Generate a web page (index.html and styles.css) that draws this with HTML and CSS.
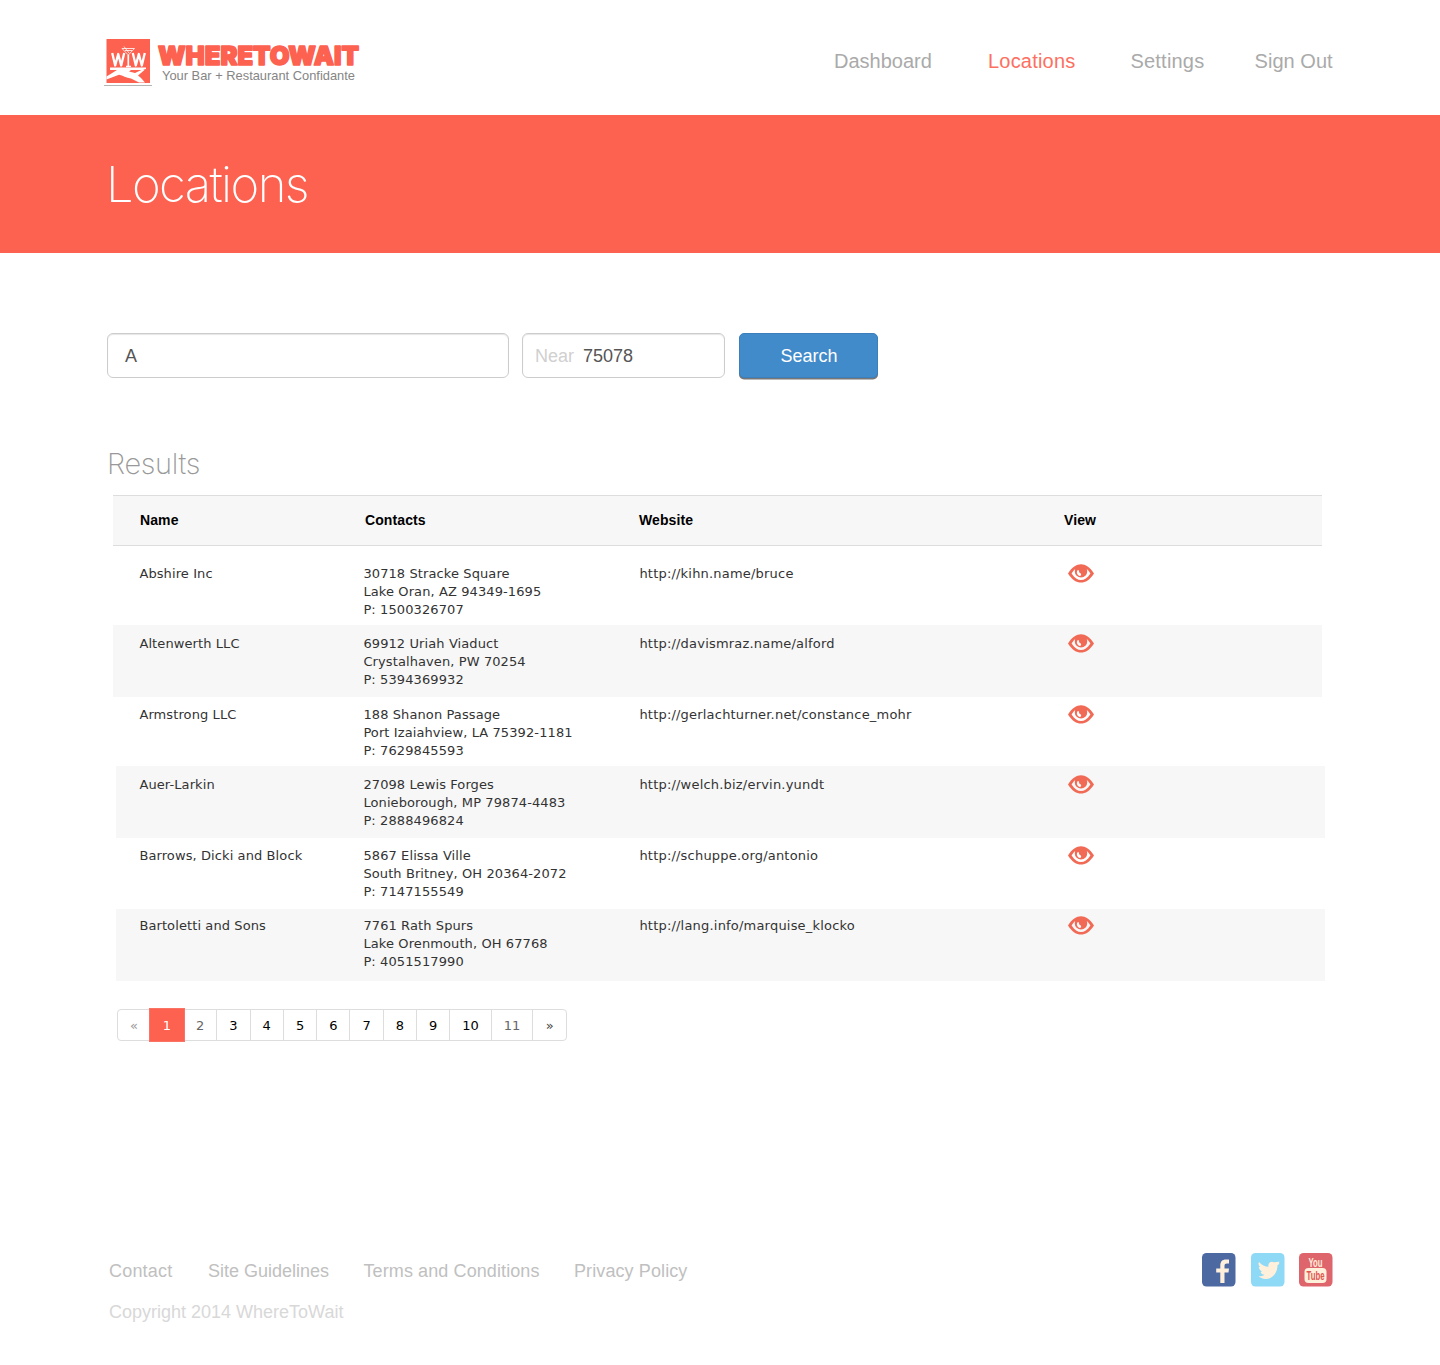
FILE: index.html
```html
<!DOCTYPE html>
<html lang="en">
<head>
<meta charset="utf-8">
<title>Locations - WhereToWait</title>
<link rel="stylesheet" href="styles.css">
</head>
<body>
<svg class="defs" aria-hidden="true">
  <symbol id="eye" viewBox="0 0 26 19">
    <path fill-rule="evenodd" d="M0 9.500C4 3 8.500 0.300 13 0.300S22 3 26 9.500C22 15.800 17.500 18.600 13 18.600S4 15.800 0 9.500ZM3.600 9.500C6.500 14 9.700 16.100 13 16.100S19.500 14 22.400 9.500C21.300 7.400 20.200 6 18.800 4.900C19.200 6 19.200 6.700 19.200 7.400A6.200 6.200 0 0 1 6.800 7.400C6.800 6.500 7 5.800 7.200 4.900C5.800 6 4.700 7.400 3.600 9.500ZM9.600 6.300C8.100 8.300 9.200 11.100 11.600 12C13.300 11.900 13.600 10.600 12.600 9.300C11.700 9 10.900 8.200 11 6.900C10.700 6.100 10.200 5.800 9.600 6.300Z"/>
  </symbol>
</svg>

<header class="header">
  <svg class="logo" viewBox="0 0 260 50" width="260" height="50" role="img" aria-label="WhereToWait">
    <rect x="2.500" y="2" width="43.500" height="44" fill="#fd6150"/>
    <path d="M0 48.500H48" stroke="#b5b5b5"/>
    <g fill="none" stroke="#fff" stroke-linejoin="round">
      <path d="M8.200 16L11.200 28.500L14.200 17L17.200 28.500L20.200 16M28.800 16L31.800 28.500L34.800 17L37.800 28.500L40.800 16" stroke-width="2.300"/>
      <path d="M18 11.500H30.500L24.300 18ZM20 9.500L25 16M21 13.500H28" stroke-width=".8"/>
      <path d="M24.300 18V30M22 29.500H27" stroke-width="1.700"/>
    </g>
    <path d="M6 30.500H42V32L38 33H27L25 34.500L31 36L38.500 32.500L40.500 33L34 38.500L37 41L41 45.500H35L27 41.500C22 41 19 38.500 15 37.800L2.500 42.500V39.500L13 33H6Z" fill="#fff"/>
    <text class="logo-name" x="54" y="27.800" textLength="201" lengthAdjust="spacingAndGlyphs">WHERETOWAIT</text>
    <text class="logo-tag" x="58" y="43" textLength="193" lengthAdjust="spacingAndGlyphs">Your Bar + Restaurant Confidante</text>
  </svg>
  <nav class="nav">
    <a class="nav-dashboard">Dashboard</a>
    <a class="nav-locations">Locations</a>
    <a class="nav-settings">Settings</a>
    <a class="nav-out">Sign Out</a>
  </nav>
</header>

<section class="banner"><h1>Locations</h1></section>

<main class="main">
  <form class="search">
    <div class="field field-name">A</div>
    <div class="field field-near"><span class="near">Near</span>75078</div>
    <button class="button" type="button">Search</button>
  </form>

  <h2>Results</h2>
  <div class="table">
    <div class="row head"><b>Name</b><b>Contacts</b><b>Website</b><b>View</b></div>
    <div class="row r1"><span>Abshire Inc</span><span>30718 Stracke Square<br>Lake Oran, AZ 94349-1695<br>P: 1500326707</span><span class="url">http://kihn.name/bruce</span><svg class="eye"><use href="#eye"/></svg></div>
    <div class="row r2 shade"><span>Altenwerth LLC</span><span>69912 Uriah Viaduct<br>Crystalhaven, PW 70254<br>P: 5394369932</span><span class="url">http://davismraz.name/alford</span><svg class="eye"><use href="#eye"/></svg></div>
    <div class="row r3"><span>Armstrong LLC</span><span>188 Shanon Passage<br>Port Izaiahview, LA 75392-1181<br>P: 7629845593</span><span class="url">http://gerlachturner.net/constance_mohr</span><svg class="eye"><use href="#eye"/></svg></div>
    <div class="row r4 shade inset"><span>Auer-Larkin</span><span>27098 Lewis Forges<br>Lonieborough, MP 79874-4483<br>P: 2888496824</span><span class="url">http://welch.biz/ervin.yundt</span><svg class="eye"><use href="#eye"/></svg></div>
    <div class="row r5"><span>Barrows, Dicki and Block</span><span>5867 Elissa Ville<br>South Britney, OH 20364-2072<br>P: 7147155549</span><span class="url">http://schuppe.org/antonio</span><svg class="eye"><use href="#eye"/></svg></div>
    <div class="row r6 shade inset"><span>Bartoletti and Sons</span><span>7761 Rath Spurs<br>Lake Orenmouth, OH 67768<br>P: 4051517990</span><span class="url">http://lang.info/marquise_klocko</span><svg class="eye"><use href="#eye"/></svg></div>
  </div>

  <div class="pager">
    <a class="first">«</a><a class="current">1</a><a class="dim">2</a><a>3</a><a>4</a><a>5</a><a>6</a><a>7</a><a>8</a><a>9</a><a class="wide">10</a><a class="wide dim">11</a><a class="last">»</a>
  </div>
</main>

<footer class="footer">
  <div>
    <div class="links"><a class="f1">Contact</a><a class="f2">Site Guidelines</a><a class="f3">Terms and Conditions</a><a class="f4">Privacy Policy</a></div>
    <p class="copy">Copyright 2014 WhereToWait</p>
  </div>
  <div class="social">
    <svg viewBox="0 0 34 34"><rect width="33.500" height="33.500" rx="4.500" fill="#4c69a2"/><path d="M18.300 30V19.500H14.200V15.500H18.300V12.500C18.300 8.500 20.300 6.500 24 6.500H27V10.500H25C23.300 10.500 22.500 11.300 22.500 12.800V15.500H27L26.500 19.500H22.500V30Z" fill="#fff0dc"/></svg>
    <svg viewBox="0 0 34 34"><rect width="33.500" height="33.500" rx="4.500" fill="#8ed9f6"/><path d="M8 9C10.500 12 14 13.700 17.500 13.700C16.500 10 20 7.700 23 9.300C25 9.500 26.500 8.500 28.500 8.800L27.700 10.300L28.500 10.800L26.500 12.300C26.500 20 21 26.500 14.500 26C11.500 25.800 9 24.500 7.500 23.500C10 23.500 12 23 13.500 21.800C11.500 21.500 10 20.500 9.600 18.900L11 18.500C9 17.500 7.800 16 7.800 13.800L9.300 14.200C7.500 12.500 7 10.800 8 9Z" fill="#fff0dc"/></svg>
    <svg viewBox="0 0 34 34"><rect width="33.500" height="33.500" rx="4.500" fill="#df656c"/><rect x="5.500" y="15" width="22" height="15" rx="4" fill="#fff0dc"/><text class="you" x="9.500" y="13.800" textLength="14" lengthAdjust="spacingAndGlyphs">You</text><text class="tube" x="7.500" y="27" textLength="18" lengthAdjust="spacingAndGlyphs">Tube</text></svg>
  </div>
</footer>
</body>
</html>
```
FILE: styles.css
```css
* { box-sizing: border-box; }
body { margin: 0; width: 1440px; height: 1365px; background: #fff; font-family: "Liberation Sans", Arial, sans-serif; color: #333; }
.defs { display: none; }

.header { height: 115px; padding: 37px 106.500px 0 104px; display: flex; justify-content: space-between; }
.logo { flex: none; }
.logo-name { font: 900 26px Inter, sans-serif; fill: #fd6150; stroke: #fd6150; stroke-width: 1.6px; stroke-linejoin: round; }
.logo-tag { font: 13px "Liberation Sans", sans-serif; fill: #858585; }
.nav { display: flex; padding-top: 12px; font-size: 20px; line-height: 24px; color: #aaa; white-space: nowrap; }
.nav a { flex: none; }
.nav-dashboard { width: 154px; }
.nav-locations { width: 142.500px; color: #fd6f60; letter-spacing: .2px; }
.nav-settings { width: 124px; letter-spacing: .2px; }
.nav-out { width: 79px; letter-spacing: .05px; }

.banner { height: 138px; background: #fd6150; padding: 38px 0 0 106px; }
h1 { margin: 0; font: 200 49px/64px Inter, sans-serif; color: #fff; letter-spacing: -1.600px; }

.main { padding: 80px 107px 0; height: 954px; }
.search { display: flex; height: 47px; }
.field { height: 45px; border: 1px solid #ccc; border-radius: 6px; box-shadow: inset 0 1px 1px rgba(0,0,0,.1); font-size: 18px; line-height: 44px; color: #555; }
.field-name { width: 402px; padding-left: 17px; margin-right: 13px; }
.field-near { width: 203px; padding-left: 12px; margin-right: 14px; display: flex; }
.near { width: 48px; color: #d0d0d0; }
.button { width: 139px; height: 45px; border: 1px solid #3b7fbd; border-radius: 5px; background: #428bca; box-shadow: 0 1.500px 0 #777; color: #fff; font: 18px/43px "Liberation Sans", sans-serif; padding: 1px 0 0 1px; }

h2 { margin: 66px 0 0; font: 200 29px/36px Inter, sans-serif; letter-spacing: -.35px; color: #999; }
.table { margin: 13px 0 0 6px; width: 1209px; font: 13px/18px "DejaVu Sans", Verdana, sans-serif; }
.row { display: grid; grid-template-columns: 224px 276px 428px 1fr; padding-left: 26px; }
.row span { padding: 1px 0 0 .4px; letter-spacing: .1px; }
.row .url { letter-spacing: .2px; }
.head { height: 51px; background: #f7f7f7; border: solid #ddd; border-width: 1px 0; padding: 15px 0 0 27px; grid-template-columns: 225px 274px 425px 1fr; font: bold 14px/18px "Liberation Sans", sans-serif; color: #000; letter-spacing: .1px; }
.shade { background: #f7f7f7; }
.inset { margin: 0 -3px 0 3px; padding-left: 23px; }
.eye { width: 26px; height: 19px; fill: #f06a55; margin-left: 1px; }
.r1 { height: 79px; padding-top: 18px; }
.r2 { height: 72px; padding-top: 9px; }
.r3 { height: 69px; padding-top: 8px; }
.r4 { height: 72px; padding-top: 9px; }
.r5 { height: 71px; padding-top: 8px; }
.r6 { height: 72px; padding-top: 7px; }

.pager { margin: 28px 0 0 10px; width: 450px; height: 32px; display: flex; border: 1px solid #ddd; border-radius: 4px; font: 500 13px/31px "DejaVu Sans", sans-serif; color: #000; }
.pager a { width: 33.300px; border-right: 1px solid #ddd; text-align: center; flex: none; }
.pager .wide { width: 41.500px; }
.pager .first { width: 32px; border: 0; color: #999; }
.pager .current { width: 36px; height: 34px; margin: -2px -1px 0 -1px; line-height: 33px; background: #fd6150; border: 1px solid #fb7364; color: #fff; }
.pager .dim { color: #666; }
.pager .last { flex: 1; border: 0; color: #444; }

.footer { padding: 46px 107px 0 109px; display: flex; justify-content: space-between; font-size: 18px; color: #c0c0c0; }
.links { display: flex; line-height: 36px; white-space: nowrap; }
.f1 { width: 99px; letter-spacing: .2px; }
.f2 { width: 155.500px; }
.f3 { width: 210.500px; letter-spacing: .1px; }
.f4 { letter-spacing: .1px; }
.copy { margin: 5px 0 0; line-height: 36px; color: #d8d8d8; }
.social { display: flex; gap: 14.500px; }
.social svg { width: 34px; height: 34px; overflow: visible; }
.you { font: bold 12px "Liberation Sans", sans-serif; fill: #fff0dc; }
.tube { font: bold 12px "Liberation Sans", sans-serif; fill: #df5650; }
```
